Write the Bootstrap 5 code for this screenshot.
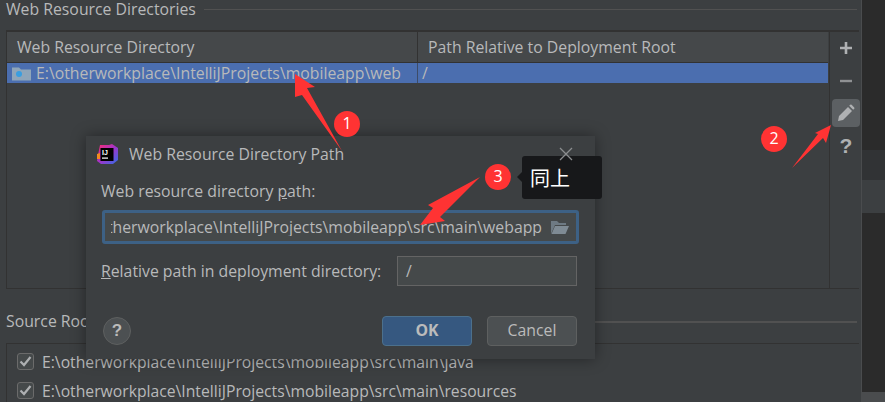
<!DOCTYPE html>
<html lang="en">
<head>
<meta charset="utf-8">
<title>Web Resource Directory Path</title>
<link href="https://cdn.jsdelivr.net/npm/bootstrap@5.3.0/dist/css/bootstrap.min.css" rel="stylesheet">
<style>
html,body{height:402px;overflow:hidden;background:#3c3f41}
body{font-family:"Open Sans","Noto Sans CJK SC",sans-serif;font-size:15.8px;color:#b8b9ba;line-height:1.2}
.stage{position:relative;width:885px;height:402px;overflow:hidden}
.main-pane{width:862px;height:402px;padding:0 2px 0 6px;background:#3c3f41;border-right:1px solid #4a4c4e}
.side-strip{width:23px}
.band-a{height:150px;background:#2b2b2b}.band-b{height:30px;background:#313335}.band-c{height:33px;background:#3c3f41}.band-d{height:179px;background:#2b2b2b}.band-e{height:10px;background:#4a4c4e}
.sect-head{height:19px;line-height:1.2}
.sect-rule{height:1px;background:#515151;margin-right:2px}
.sect-rule-b{height:2px;background:#515151;margin-right:2px}
.dir-table{height:259px;margin-top:11px;border-top:2px solid #323232;border-left:1px solid #323232;border-bottom:1px solid #323232}
.tbl-area{min-width:0}
.tbl-head{height:31px;background:#45484a;border-bottom:1px solid #323232}
.cell-a{width:411px;padding-left:10px;border-right:1px solid #323232}
.cell-b{padding-left:10px}
.tbl-row{height:20px;background:#4b6eaf}
.row-a{width:411px;padding-left:5px;border-right:1px solid #3d4c68}
.row-folder{margin-right:1px}
.row-b{padding-left:4px}
.tool-col{width:30px;margin-left:1px;border-left:1px solid #323232;padding-top:2px}
.tool-btn{width:28px;height:28px;border-radius:4px;margin-left:2px}
.tool-gap{margin-top:5px}
.tool-on{background:#5c6063}
.tool-q{font-family:"Liberation Sans",sans-serif;font-weight:700;font-size:21px;color:#afb1b3}
.src-head{height:17px;margin-top:24px}
.src-list{margin-top:13px;border-top:1px solid #323232;border-left:1px solid #323232;padding:9px 0 0 10px;font-size:15.72px}
.src-row{height:29px}
.chk{width:17px;height:17px;border:1px solid #6b6b6b;border-radius:3px;background:#45494a;margin-right:8px}
.dlg{position:absolute;left:86px;top:136px;width:509px;height:223px;background:#3c3f41;box-shadow:0 0 14px rgba(0,0,0,.4);padding:0 18px 0 15px}
.dlg-title{height:36px}
.dlg-close{position:relative;z-index:5}
.dlg-label{margin:10px 0;height:18px}
.path-input{width:477px;height:34px;margin-left:1px;background:#45494a;border:3px solid #3d6185;border-radius:3px;padding:0 6px 0 6px}
.path-text{min-width:0;white-space:nowrap}
.rel-input{width:180px;height:30px;background:#45494a;border:1px solid #646464;padding:0 8px}
.rel-row{margin-top:12px}
.dlg-foot{margin-top:30px}
.help-circle{width:28px;height:28px;margin-left:2px;border-radius:50%;background:#4c5052;border:1px solid #5e6060;font-family:"Liberation Sans",sans-serif;font-weight:700;font-size:17px;color:#bbb}
.act-btn{width:90px;height:30px;padding:0;font-size:15.8px;border-radius:4px;line-height:1}
.act-ok{background:#365880;border:1px solid #4c708c;color:#bbb;font-weight:700}
.act-cancel{background:#4c5052;border:1px solid #5e6060;color:#bbb;margin-left:15px}
.callouts{position:absolute;left:0;top:0;width:885px;height:402px;pointer-events:none}
.num-pin{position:absolute;width:26px;height:26px;border-radius:50%;background:#ff3333;color:#fff;font-size:16px}
.tip-box{position:absolute;left:522px;top:156px;width:80px;height:43px;background:#17181a;border-radius:3px;color:#fff;font-size:20px;padding-left:8px;font-family:"Noto Sans CJK SC",sans-serif}
.tip-box::before{content:"";position:absolute;left:-5px;top:16px;border:5px solid transparent;border-left:0;border-right-color:#17181a}
.logo-wrap{width:22px;height:20px;margin:0 10px 0 -4px}
.ij-text{font:700 7px "Liberation Sans",sans-serif;fill:#fff}
</style>
</head>
<body>
<div class="stage d-flex">
  <div class="main-pane flex-shrink-0">
    <div class="sect-head d-flex align-items-center gap-2">
      <span>Web Resource Directories</span><div class="sect-rule flex-grow-1"></div>
    </div>
    <div class="dir-table d-flex">
      <div class="tbl-area flex-grow-1 d-flex flex-column">
        <div class="tbl-head d-flex align-items-center">
          <div class="cell-a h-100 d-flex align-items-center">Web Resource Directory</div>
          <div class="cell-b">Path Relative to Deployment Root</div>
        </div>
        <div class="tbl-row d-flex align-items-center">
          <div class="row-a h-100 d-flex align-items-center gap-1">
            <svg class="row-folder" width="19" height="16" viewBox="0 0 19 16"><path d="M0 2.5h7l2 2h10V15.500H0z" fill="#8fa5b9"/><circle cx="7" cy="9" r="3" fill="#3a9ee0"/></svg>
            <span>E:\otherworkplace\IntelliJProjects\mobileapp\web</span>
          </div>
          <div class="row-b">/</div>
        </div>
      </div>
      <div class="tool-col flex-shrink-0 d-flex flex-column">
        <div class="tool-btn d-flex align-items-center justify-content-center"><svg width="14" height="14" viewBox="0 0 14 14"><path d="M7 1v12M1 7h12" stroke="#afb1b3" stroke-width="2.600"/></svg></div>
        <div class="tool-btn tool-gap d-flex align-items-center justify-content-center"><svg width="14" height="14" viewBox="0 0 14 14"><path d="M1 7h12" stroke="#8f9193" stroke-width="2.400"/></svg></div>
        <div class="tool-btn tool-on d-flex align-items-center justify-content-center mt-1"><svg width="18" height="18" viewBox="0 0 18 18"><path d="M1 17l1-5L11 3l4 4-9 9zM12.200 1.800l1-1a1 1 0 0 1 1.400 0l2.600 2.600a1 1 0 0 1 0 1.400l-1 1z" fill="#afb1b3"/></svg></div>
        <div class="tool-btn tool-gap tool-q d-flex align-items-center justify-content-center">?</div>
      </div>
    </div>
    <div class="src-head d-flex align-items-center gap-2">
      <span>Source Roots</span><div class="sect-rule-b flex-grow-1"></div>
    </div>
    <div class="src-list">
      <div class="src-row d-flex align-items-start">
        <span class="chk d-flex align-items-center justify-content-center flex-shrink-0"><svg width="13" height="11" viewBox="0 0 13 11"><path d="M1.500 5.500l3.500 3.500 6.500-8" fill="none" stroke="#aeb0b2" stroke-width="2.200"/></svg></span>
        <span>E:\otherworkplace\IntelliJProjects\mobileapp\src\main\java</span>
      </div>
      <div class="src-row d-flex align-items-start">
        <span class="chk d-flex align-items-center justify-content-center flex-shrink-0"><svg width="13" height="11" viewBox="0 0 13 11"><path d="M1.500 5.500l3.500 3.500 6.500-8" fill="none" stroke="#aeb0b2" stroke-width="2.200"/></svg></span>
        <span>E:\otherworkplace\IntelliJProjects\mobileapp\src\main\resources</span>
      </div>
    </div>
  </div>
  <div class="side-strip d-flex flex-column flex-shrink-0">
    <div class="band-a"></div><div class="band-b"></div><div class="band-c"></div><div class="band-d"></div><div class="band-e"></div>
  </div>

  <div class="dlg d-flex flex-column">
    <div class="dlg-title d-flex align-items-center">
      <svg class="logo-wrap flex-shrink-0" viewBox="0 0 22 20">
        <defs><linearGradient id="lg" x1="0" y1="0" x2="1" y2="1"><stop offset="0" stop-color="#ff2d6f"/><stop offset=".5" stop-color="#a333c8"/><stop offset="1" stop-color="#2f6fe8"/></linearGradient></defs>
        <path d="M3 1h9l3-1 6 4v12l-5 4H4L0 17l1-6z" fill="url(#lg)"/>
        <path d="M0 10l3-1v6H0z" fill="#f58a1f"/>
        <rect x="3.500" y="4" width="13" height="13" fill="#000"/>
        <text class="ij-text" x="5" y="10.500">IJ</text>
        <rect x="5" y="13.500" width="6" height="1.200" fill="#fff"/>
      </svg>
      <span>Web Resource Directory Path</span>
      <svg class="dlg-close ms-auto me-1" width="14" height="14" viewBox="0 0 14 14"><path d="M1 1l12 12M13 1L1 13" stroke="#8b8d8f" stroke-width="1.300"/></svg>
    </div>
    <div class="dlg-label">Web resource directory <u>p</u>ath:</div>
    <div class="path-input d-flex align-items-center">
      <div class="path-text flex-grow-1 overflow-hidden d-flex justify-content-end"><span class="flex-shrink-0">E:\otherworkplace\IntelliJProjects\mobileapp\src\main\webapp</span></div>
      <svg class="ms-2 flex-shrink-0" width="20" height="15" viewBox="0 0 20 15"><path d="M1 1h6l2 2h7v2H5L1 14z" fill="#6e7a83"/><path d="M5 6h14l-3.500 8H1.500z" fill="#7f8b94"/></svg>
    </div>
    <div class="rel-row d-flex align-items-center justify-content-between">
      <span><u>R</u>elative path in deployment directory:</span>
      <div class="rel-input d-flex align-items-center">/</div>
    </div>
    <div class="dlg-foot d-flex align-items-center">
      <div class="help-circle d-flex align-items-center justify-content-center">?</div>
      <button type="button" class="btn act-btn act-ok ms-auto">OK</button>
      <button type="button" class="btn act-btn act-cancel">Cancel</button>
    </div>
  </div>

  <svg class="callouts" viewBox="0 0 885 402">
    <path d="M295 74L315 87 307 88 342 151 302 95 295 97z" fill="#ff3333"/>
    <path d="M831 125L815 133 818 134 792 168 823 138 826 143z" fill="#ff3333"/>
    <path d="M480 177L428 205 433 208 420 225 445 221 440 217z" fill="#ff3333"/>
  </svg>
  <div class="num-pin d-flex align-items-center justify-content-center" style="left:334px;top:111px">1</div>
  <div class="num-pin d-flex align-items-center justify-content-center" style="left:761px;top:126px">2</div>
  <div class="num-pin d-flex align-items-center justify-content-center" style="left:485px;top:164px">3</div>
  <div class="tip-box d-flex align-items-center">同上</div>
</div>
<script src="https://cdn.jsdelivr.net/npm/bootstrap@5.3.0/dist/js/bootstrap.bundle.min.js"></script>
</body>
</html>
